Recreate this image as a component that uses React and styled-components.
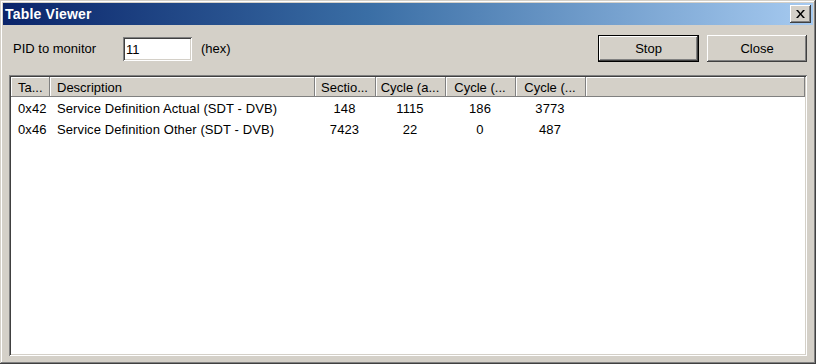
import React from "react";
import styled, { createGlobalStyle } from "styled-components";

const Global = createGlobalStyle`
  html, body { margin: 0; padding: 0; background: #d4d0c8; }
  body { font-family: "Liberation Sans", Arial, sans-serif; font-size: 13px; color: #000; }
  * { box-sizing: border-box; }
`;

const Window = styled.div`
  width: 816px;
  height: 364px;
  background: #d4d0c8;
  padding: 3px;
  display: flex;
  flex-direction: column;
  box-shadow: inset -1px -1px #404040, inset 1px 1px #d4d0c8,
    inset -2px -2px #808080, inset 2px 2px #ffffff;
`;

const TitleBar = styled.div`
  height: 22px;
  flex: none;
  display: flex;
  align-items: center;
  justify-content: space-between;
  padding: 0 2px 0 2px;
  background: linear-gradient(to right, #0a246a 0%, #3a6ea5 45%, #a6caf0 100%);
`;

const Title = styled.span`
  color: #fff;
  font-weight: bold;
  font-size: 14px;
  letter-spacing: 0.2px;
`;

const CloseBox = styled.button`
  width: 21px;
  height: 18px;
  padding: 0;
  margin: 0;
  border: none;
  background: #d4d0c8;
  display: flex;
  align-items: center;
  justify-content: center;
  box-shadow: inset -1px -1px #404040, inset 1px 1px #ffffff,
    inset -2px -2px #808080, inset 2px 2px #d4d0c8;
`;

const Body = styled.div`
  flex: 1;
  display: flex;
  flex-direction: column;
  padding: 10px 6px 5px 6px;
  min-height: 0;
`;

const Toolbar = styled.div`
  display: flex;
  align-items: center;
  height: 27px;
  margin-bottom: 13px;
`;

const Label = styled.span`
  width: 110px;
  margin-left: 4px;
  font-size: 13px;
`;

const Input = styled.input`
  width: 69px;
  height: 24px;
  border: none;
  padding: 2px 3px 0 3px;
  font-family: "Liberation Sans", Arial, sans-serif;
  font-size: 13px;
  color: #000;
  background: #fff;
  outline: none;
  box-shadow: inset 1px 1px #808080, inset -1px -1px #ffffff,
    inset 2px 2px #404040, inset -2px -2px #d4d0c8;
`;

const Unit = styled.span`
  margin-left: 9px;
`;

const Spacer = styled.div`
  flex: 1;
`;

const Button = styled.button`
  width: ${(p) => (p.$wide ? 101 : 100)}px;
  height: 27px;
  margin-left: ${(p) => (p.$gap ? 8 : 0)}px;
  border: none;
  background: #d4d0c8;
  font-family: "Liberation Sans", Arial, sans-serif;
  font-size: 13px;
  color: #000;
  padding: 0;
  box-shadow: ${(p) =>
    p.$default
      ? "inset -1px -1px #000, inset 1px 1px #000, inset -2px -2px #404040, inset 2px 2px #ffffff, inset -3px -3px #808080"
      : "inset -1px -1px #404040, inset 1px 1px #ffffff, inset -2px -2px #808080, inset 2px 2px #d4d0c8"};
`;

const ListView = styled.div`
  flex: 1;
  background: #fff;
  padding: 2px;
  box-shadow: inset 1px 1px #808080, inset -1px -1px #ffffff,
    inset 2px 2px #404040, inset -2px -2px #d4d0c8;
  display: flex;
  flex-direction: column;
`;

const HeaderRow = styled.div`
  display: flex;
  height: 20px;
  flex: none;
  margin-bottom: 1px;
`;

const HeaderCell = styled.div`
  width: ${(p) => (p.$w ? `${p.$w}px` : "auto")};
  flex: ${(p) => (p.$w ? "none" : 1)};
  height: 20px;
  background: #d4d0c8;
  display: flex;
  align-items: center;
  justify-content: ${(p) => (p.$center ? "center" : "flex-start")};
  padding: ${(p) => (p.$center ? "0 2px 0 0" : "0 0 0 7px")};
  white-space: nowrap;
  overflow: hidden;
  box-shadow: inset -1px -1px #808080, inset 1px 1px #ffffff;
`;

const Row = styled.div`
  display: flex;
  height: 21px;
  align-items: center;
  letter-spacing: 0.1px;
`;

const Cell = styled.div`
  width: ${(p) => p.$w}px;
  flex: none;
  text-align: ${(p) => (p.$center ? "center" : "left")};
  padding: ${(p) => (p.$center ? "0 2px 0 0" : "0 0 0 7px")};
  white-space: nowrap;
  overflow: hidden;
`;

const columns = [
  { title: "Ta...", w: 39 },
  { title: "Description", w: 265 },
  { title: "Sectio...", w: 61, center: true },
  { title: "Cycle (a...", w: 70, center: true },
  { title: "Cycle (...", w: 70, center: true },
  { title: "Cycle (...", w: 70, center: true },
];

const rows = [
  ["0x42", "Service Definition Actual (SDT - DVB)", "148", "1115", "186", "3773"],
  ["0x46", "Service Definition Other (SDT - DVB)", "7423", "22", "0", "487"],
];

export default function App() {
  return (
    <>
      <Global />
      <Window>
        <TitleBar>
          <Title>Table Viewer</Title>
          <CloseBox aria-label="Close">
            <svg width="9" height="8" viewBox="0 0 9 8">
              <path d="M0 0h2l2.5 3 2.5-3h2L5.5 4 9 8H7L4.5 5 2 8H0l3.5-4z" fill="#000" />
            </svg>
          </CloseBox>
        </TitleBar>
        <Body>
          <Toolbar>
            <Label>PID to monitor</Label>
            <Input defaultValue="11" />
            <Unit>(hex)</Unit>
            <Spacer />
            <Button $default $wide>Stop</Button>
            <Button $gap>Close</Button>
          </Toolbar>
          <ListView>
            <HeaderRow>
              {columns.map((c, i) => (
                <HeaderCell key={i} $w={c.w} $center={c.center}>
                  {c.title}
                </HeaderCell>
              ))}
              <HeaderCell />
            </HeaderRow>
            {rows.map((r, i) => (
              <Row key={i}>
                {r.map((v, j) => (
                  <Cell key={j} $w={columns[j].w} $center={columns[j].center}>
                    {v}
                  </Cell>
                ))}
              </Row>
            ))}
          </ListView>
        </Body>
      </Window>
    </>
  );
}
